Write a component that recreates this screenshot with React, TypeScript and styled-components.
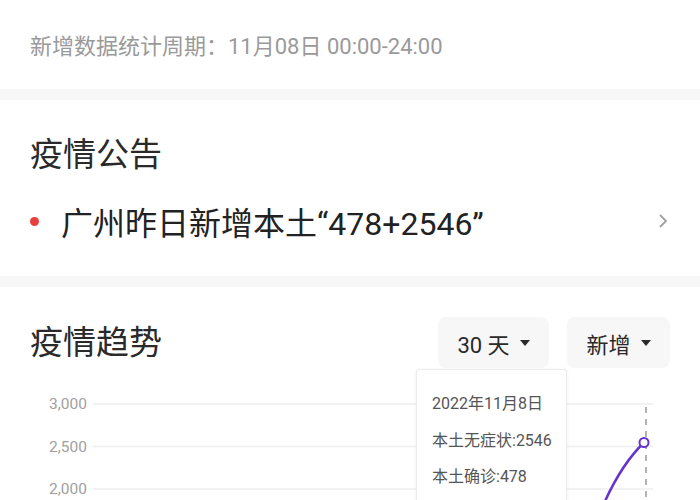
import styled, { createGlobalStyle } from "styled-components";

const GlobalStyle = createGlobalStyle`
    html, body {
        margin: 0;
        padding: 0;
        background: #f7f7f7;
        font-family: Roboto, "Noto Sans CJK SC", sans-serif;
        overflow: hidden;
    }
`;

const gridLines = [
    { label: "3,000", y: 36 },
    { label: "2,500", y: 78.5 },
    { label: "2,000", y: 121 },
];

const tipLines = ["2022年11月8日", "本土无症状:2546", "本土确诊:478"];

export default function App() {
    return (
        <Page>
            <GlobalStyle />
            <Period>新增数据统计周期：11月08日 00:00-24:00</Period>

            <Notice>
                <Title>疫情公告</Title>
                <NoticeRow>
                    <Dot />
                    <NoticeText>广州昨日新增本土“478+2546”</NoticeText>
                    <svg width="10" height="16" viewBox="0 0 10 16">
                        <polyline points="2,2 8,8 2,14" fill="none" stroke="#a0a0a0" strokeWidth="1.8" />
                    </svg>
                </NoticeRow>
            </Notice>

            <Trend>
                <TrendHeader>
                    <Title>疫情趋势</Title>
                    <Selects>
                        <Select $width={111}>
                            30 天 <Caret />
                        </Select>
                        <Select $width={103}>
                            新增 <Caret />
                        </Select>
                    </Selects>
                </TrendHeader>

                <ChartWrap>
                    <svg width="700" height="200">
                        {gridLines.map((g) => (
                            <g key={g.label}>
                                <line x1="93" x2="653" y1={g.y} y2={g.y} stroke="#eeeeee" strokeWidth="1.5" />
                                <text
                                    x="87"
                                    y={g.y + 5}
                                    textAnchor="end"
                                    fontSize="15.5"
                                    fill="#a0a0a0"
                                    fontFamily="Roboto, sans-serif"
                                >
                                    {g.label}
                                </text>
                            </g>
                        ))}
                        <line x1="93" x2="653" y1="163.5" y2="163.5" stroke="#eeeeee" strokeWidth="1.5" />
                        <line x1="646" x2="646" y1="39" y2="200" stroke="#9a9a9a" strokeWidth="1.5" strokeDasharray="6 6" />
                        <path d="M 602 140 C 614 112, 628 90, 644 74.5" fill="none" stroke="#6633cc" strokeWidth="2.5" />
                        <circle cx="644" cy="74.5" r="4.5" fill="#fff" stroke="#6633cc" strokeWidth="2" />
                    </svg>
                    <Tooltip>
                        {tipLines.map((t) => (
                            <TipLine key={t}>{t}</TipLine>
                        ))}
                    </Tooltip>
                </ChartWrap>
            </Trend>
        </Page>
    );
}

const Page = styled.div`
    width: 700px;
    height: 500px;
    overflow: hidden;
`;

const Card = styled.section`
    background: #fff;
    margin-bottom: 11px;
    padding: 0 30px;
`;

const Period = styled(Card)`
    height: 89px;
    display: flex;
    align-items: center;
    padding-bottom: 2px;
    box-sizing: border-box;
    font-size: 22px;
    color: #9a9a9a;
`;

const Notice = styled(Card)`
    height: 176px;
    padding-top: 34px;
    box-sizing: border-box;
`;

const Title = styled.h2`
    margin: 0;
    font-size: 33px;
    font-weight: 400;
    line-height: 42px;
    color: #2a2a2a;
`;

const NoticeRow = styled.div`
    display: flex;
    align-items: center;
    margin-top: 23px;
    height: 44px;

    svg {
        margin-left: auto;
        margin-right: 2px;
    }
`;

const Dot = styled.span`
    width: 9px;
    height: 9px;
    border-radius: 50%;
    background: #e8403f;
    margin-right: 22px;
`;

const NoticeText = styled.span`
    font-size: 32px;
    color: #222;
`;

const Trend = styled(Card)`
    padding-top: 30px;
    height: 300px;
    position: relative;
`;

const TrendHeader = styled.div`
    display: flex;
    align-items: center;
    justify-content: space-between;
    height: 51px;
`;

const Selects = styled.div`
    display: flex;
    gap: 18px;
`;

const Select = styled.div<{ $width: number }>`
    width: ${(p) => p.$width}px;
    height: 51px;
    border-radius: 8px;
    background: #f7f7f7;
    display: flex;
    align-items: center;
    justify-content: center;
    gap: 10px;
    font-size: 22px;
    color: #2a2a2a;
`;

const Caret = styled.span`
    width: 0;
    height: 0;
    border-left: 5px solid transparent;
    border-right: 5px solid transparent;
    border-top: 6px solid #2a2a2a;
`;

const ChartWrap = styled.div`
    position: relative;
    margin: 0 -30px;
    height: 200px;

    svg {
        display: block;
    }
`;

const Tooltip = styled.div`
    position: absolute;
    left: 416px;
    top: 1px;
    width: 151px;
    height: 180px;
    box-sizing: border-box;
    padding: 16px 0 0 15px;
    background: #fff;
    border: 1px solid #ececec;
    border-radius: 3px;
    box-shadow: 0 1px 4px rgba(0, 0, 0, 0.06);
`;

const TipLine = styled.div`
    font-size: 16px;
    line-height: 36.5px;
    color: #555;
    white-space: nowrap;
`;
